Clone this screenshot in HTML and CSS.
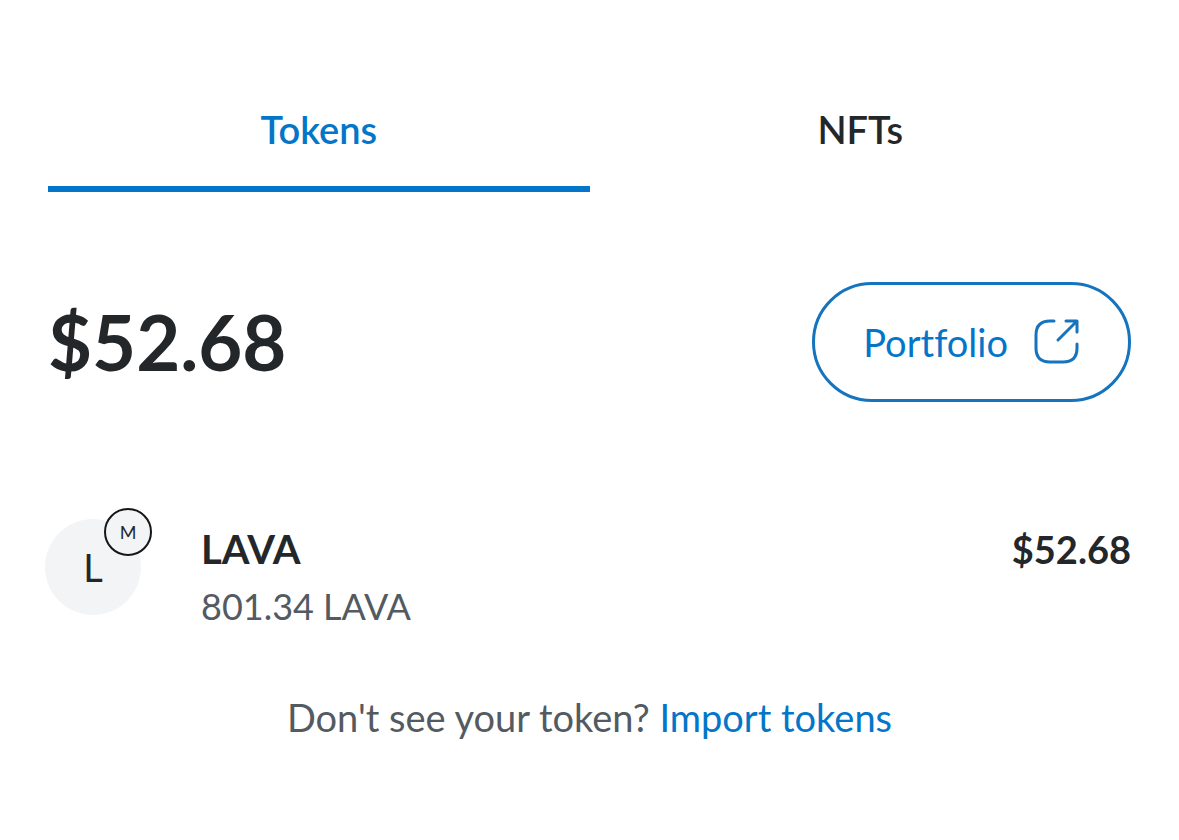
FILE: index.html
```html
<!DOCTYPE html>
<html lang="en">
<head>
    <meta charset="UTF-8">
    <meta name="viewport" content="width=device-width, initial-scale=1.0">
    <title>Tokens</title>
    <link rel="stylesheet" href="styles.css">
</head>
<body>
    <main class="wallet">
        <div class="tabs" role="tablist">
            <button class="tab active" type="button" role="tab" aria-selected="true">Tokens</button>
            <button class="tab" type="button" role="tab" aria-selected="false">NFTs</button>
        </div>
        <div class="balance">
            <h1 class="total">$52.68</h1>
            <button class="portfolio" type="button">
                Portfolio
                <svg class="export" viewBox="0 0 48 48" aria-hidden="true">
                    <path d="M22 3H18Q4 3 4 17V30Q4 44 18 44H31Q45 44 45 30V26"/>
                    <path d="M26 22L45 3M34 3H45V14"/>
                </svg>
            </button>
        </div>
        <div class="token">
            <div class="avatar">
                L
                <span class="network">M</span>
            </div>
            <div class="info">
                <span class="name">LAVA</span>
                <span class="amount">801.34 LAVA</span>
            </div>
            <span class="value">$52.68</span>
        </div>
        <p class="import">Don't see your token? <a href="#">Import tokens</a></p>
    </main>
</body>
</html>
```
FILE: styles.css
```css
*{
    box-sizing: border-box;
}
body{
    margin: 0;
    background-color: #fff;
    color: #24272a;
    font-family: Lato, "Liberation Sans", sans-serif;
    font-size: 38px;
    line-height: 48px;
    font-variant-ligatures: none;
}
button{
    font: inherit;
    font-variant-ligatures: none;
    background: none;
    cursor: pointer;
}
.wallet{
    padding: 72px 48px;
}
.tabs{
    display: flex;
}
.tab{
    flex: 1;
    height: 120px;
    padding: 0;
    border: none;
    border-bottom: 6px solid transparent;
    color: #24272a;
    font-weight: 600;
}
.tab.active{
    color: #0376c9;
    border-color: #0376c9;
}
.balance,.token{
    display: flex;
    align-items: center;
    justify-content: space-between;
}
.balance{
    margin-top: 90px;
}
.total{
    margin: 0;
    font-size: 76px;
    line-height: 96px;
    font-weight: 700;
}
.portfolio{
    display: flex;
    align-items: center;
    gap: 24px;
    height: 120px;
    padding: 0 48px;
    border: 3px solid #1574bd;
    border-radius: 60px;
    color: #0376c9;
}
.export{
    width: 48px;
    height: 48px;
    fill: none;
    stroke: #1574bd;
    stroke-width: 3;
    stroke-linecap: round;
    stroke-linejoin: round;
}
.token{
    align-items: flex-start;
    margin-top: 117px;
    line-height: 60px;
}
.avatar{
    position: relative;
    width: 96px;
    height: 96px;
    margin-left: -3px;
    border-radius: 50%;
    background-color: #f2f4f6;
    line-height: 96px;
    text-align: center;
}
.network{
    position: absolute;
    top: -11px;
    right: -11px;
    width: 48px;
    height: 48px;
    border: 2px solid #141618;
    border-radius: 50%;
    background-color: #f2f4f6;
    font-size: 18px;
    line-height: 44px;
}
.info{
    display: flex;
    flex: 1;
    flex-direction: column;
    margin-left: 60px;
}
.name,.value{
    font-weight: 700;
}
.name{
    font-size: 40px;
}
.amount{
    color: #535a61;
    font-size: 36px;
    line-height: 54px;
}
.import{
    margin: 60px 0 0;
    color: #535a61;
    text-align: center;
}
.import a{
    color: #0376c9;
    text-decoration: none;
}
```
